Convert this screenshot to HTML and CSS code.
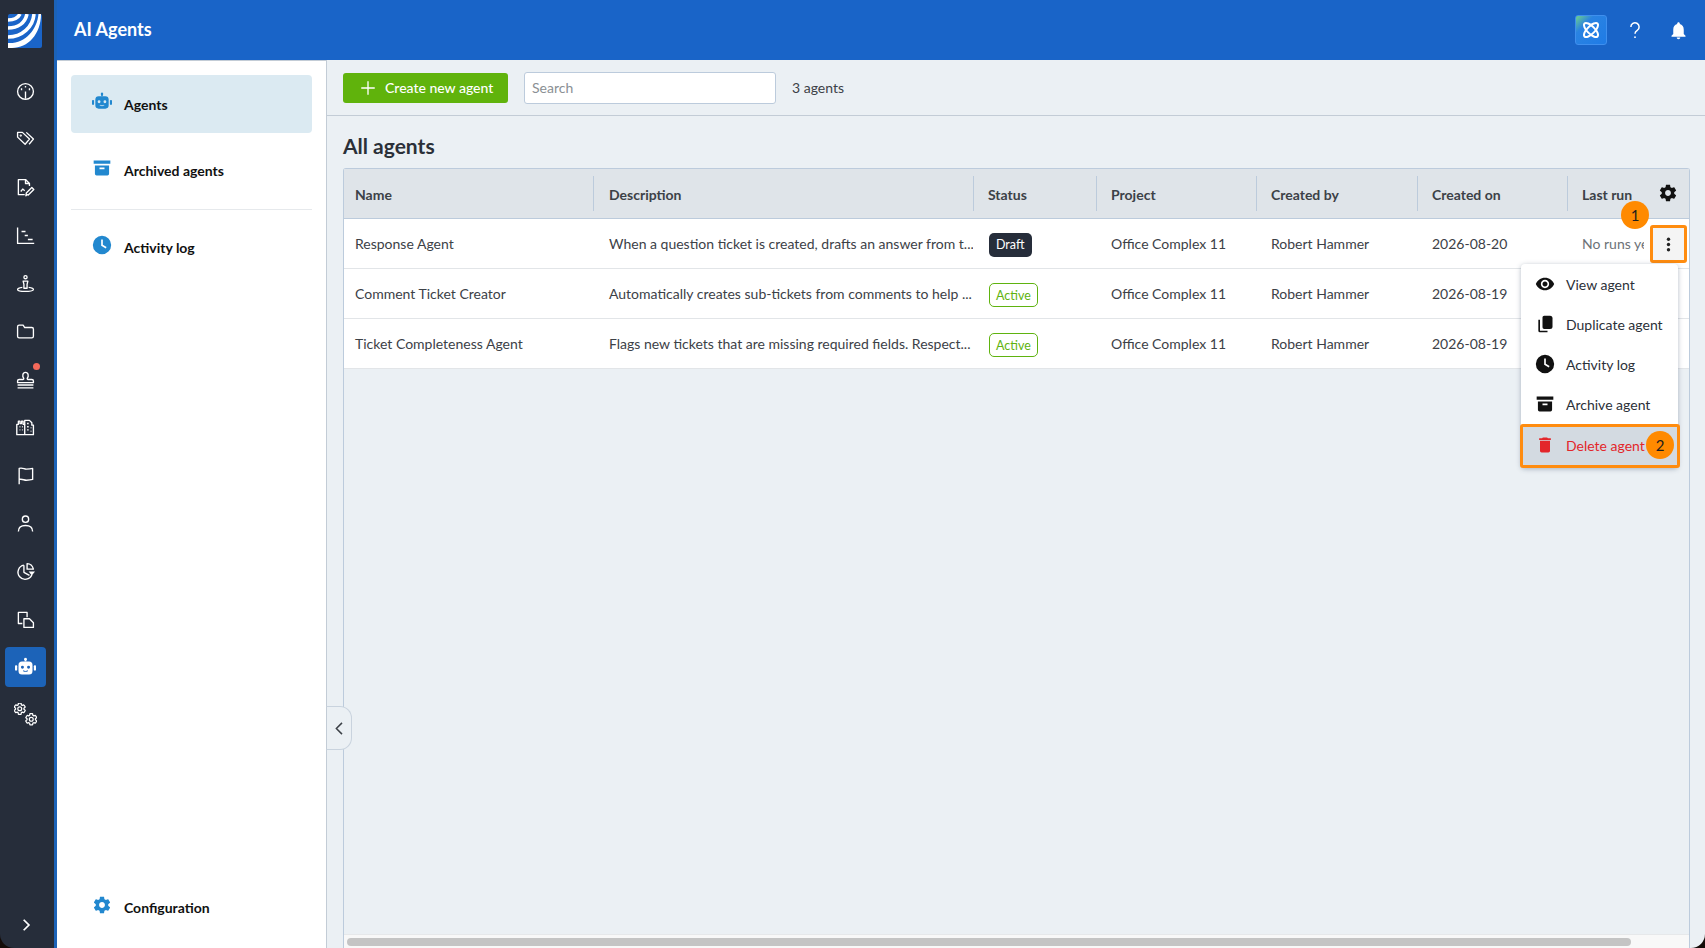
FILE: index.html
```html
<!DOCTYPE html>
<html lang="en">
  <head>
    <meta charset="UTF-8" />
    <meta name="viewport" content="width=device-width, initial-scale=1.0" />
    <title>AI Agents</title>
    <link rel="stylesheet" href="styles.css">
  </head>
  <body>
    <div class="app">
      <nav class="rail">
        <svg class="logo" viewBox="0 0 34 34">
          <rect width="34" height="34" rx="2" fill="#1a64c8" />
          <g fill="none" stroke="#fff" stroke-width="3.600">
            <path d="M0 6C6 6 10 4 12 0" />
            <path d="M0 14C10 14 17 9 19 0" />
            <path d="M0 23C14 23 25 13 26 0" />
          </g>
          <path fill="#fff" d="M0 29C17 30 29 16 30.500 0H33C33 20 20 34 4 34H0z" />
        </svg>
        <ul class="rail-list">
          <li class="rail-item">
            <svg viewBox="0 0 24 24"><circle cx="12" cy="12" r="10" /><path d="M12 12v9M12 5v2M7 8v2.500M17 8v2.500" /></svg>
          </li>
          <li class="rail-item">
            <svg viewBox="0 0 24 24"><path d="M2 9V3h6l9 8.500L11.500 18z" /><path d="M13 3l9 8.500L16.500 18" /><circle cx="6" cy="7" r=".6" /></svg>
          </li>
          <li class="rail-item">
            <svg viewBox="0 0 24 24"><path d="M11 21H3V2h9l5 5v3" /><path d="M12 2v5h5" /><path d="M6 17l2.500-3 2.500 2" /><path d="M14 21l-1.500 1.500.5-3.500 7-7 2.500 2.500-7 7z" /></svg>
          </li>
          <li class="rail-item">
            <svg viewBox="0 0 24 24"><path d="M2 2v20h21" /><path d="M7 7h5M11 12h4M15 17h6" /></svg>
          </li>
          <li class="rail-item">
            <svg viewBox="0 0 24 24"><circle cx="12" cy="4" r="2" /><path d="M9 9h6l-1 4v5h-4v-5z" /><path d="M8 17c-3 .5-6 1.500-6 2.500C2 21 7 22 12 22s10-1 10-2.500c0-1-3-2-6-2.500" /></svg>
          </li>
          <li class="rail-item">
            <svg viewBox="0 0 24 24"><path d="M2 6a2 2 0 0 1 2-2h5l2 3h9a2 2 0 0 1 2 2v9a2 2 0 0 1-2 2H4a2 2 0 0 1-2-2z" /></svg>
          </li>
          <li class="rail-item has-dot">
            <svg viewBox="0 0 24 24"><path d="M2 19h20M2 22.500h20" /><path d="M2 16v-2c0-1 1-2 2-2h5c1 0 1-1 .5-2C8 8 8 3 12 3s4 5 2.500 7c-.5 1-.5 2 .5 2h5c1 0 2 1 2 2v2z" /></svg>
          </li>
          <li class="rail-item">
            <svg viewBox="0 0 24 24"><path d="M1 21V8h2V4h2v3h2V4h2v4h2V3h6l3 3v3h2v12z" /><path d="M11 8v13M4.500 11h1M7.500 11h1M4.500 15h1M7.500 15h1M14 7h2M14 11h2M14 15h2M19 12v1M19 16v1" /></svg>
          </li>
          <li class="rail-item">
            <svg viewBox="0 0 24 24"><path d="M4 23V3c5-1 6 1 9 1s5 0 8-1v14c-3 1-5 1-8 1s-5-2-9-1" /></svg>
          </li>
          <li class="rail-item">
            <svg viewBox="0 0 24 24"><circle cx="12" cy="6.500" r="4" /><path d="M3 22c0-5 4-7.500 9-7.500s9 2.500 9 7.500" /></svg>
          </li>
          <li class="rail-item">
            <svg viewBox="0 0 24 24"><path d="M10 4a9 9 0 1 0 10 12" /><path d="M10 4v9l7 4" /><path d="M14 2c4 0 7 3 8 7h-8z" /><path class="solid" d="M16 12h8l-4 5z" /></svg>
          </li>
          <li class="rail-item">
            <svg viewBox="0 0 24 24"><path d="M8 17H3V3h11v6" /><path d="M10 11h7l5 5v6H10z" /></svg>
          </li>
          <li class="rail-item is-active">
            <svg viewBox="0 0 24 24"><use href="#robot" /></svg>
          </li>
          <li class="rail-item rail-gears">
            <svg viewBox="0 0 24 24"><use href="#gear" x="-1" y="-1" width="14" height="14" /><use href="#gear" x="11" y="10" width="14" height="14" /></svg>
          </li>
        </ul>
        <svg class="rail-toggle" viewBox="0 0 24 24"><path d="M8 3l9 9-9 9" /></svg>
      </nav>

      <div class="page">
        <header class="topbar">
          <h1>AI Agents</h1>
          <div class="topbar-icons">
            <span class="assist">
              <svg viewBox="0 0 24 24"><ellipse cx="12" cy="12" rx="11" ry="4.500" transform="rotate(45 12 12)" /><ellipse cx="12" cy="12" rx="11" ry="4.500" transform="rotate(-45 12 12)" /></svg>
            </span>
            <svg class="help" viewBox="0 0 24 24"><path d="M6.500 8a5.500 5.500 0 1 1 8.500 4.500c-2 1.300-3 2.200-3 4.500" /><circle cx="12" cy="21.500" r="1.200" /></svg>
            <svg class="bell" viewBox="0 0 24 24"><path d="M12 22c1.100 0 2-.9 2-2h-4c0 1.100.9 2 2 2zm6-6v-5c0-3.070-1.640-5.640-4.500-6.320V4c0-.83-.67-1.500-1.500-1.500s-1.500.67-1.500 1.500v.68C7.630 5.360 6 7.920 6 11v5l-2 2v1h16v-1l-2-2z" /></svg>
          </div>
        </header>

        <div class="content">
          <aside class="side">
            <a class="side-link is-current">
              <svg class="blue-icon" viewBox="0 0 24 24"><use href="#robot" /></svg>
              Agents
            </a>
            <a class="side-link">
              <svg class="blue-icon" viewBox="0 0 24 24"><use href="#archive" /></svg>
              Archived agents
            </a>
            <hr class="side-rule" />
            <a class="side-link">
              <svg class="blue-icon" viewBox="0 0 24 24"><use href="#clock" /></svg>
              Activity log
            </a>
            <a class="side-link side-bottom">
              <svg class="blue-icon" viewBox="0 0 24 24"><use href="#gear" /></svg>
              Configuration
            </a>
          </aside>

          <main class="main">
            <div class="toolbar">
              <button class="create-btn">
                <svg viewBox="0 0 24 24"><path d="M12 3v18M3 12h18" /></svg>
                Create new agent
              </button>
              <input class="search" type="text" placeholder="Search" />
              <span class="count">3 agents</span>
            </div>

            <div class="body">
              <h2>All agents</h2>
              <div class="table-wrap">
                <table class="agents">
                  <colgroup>
                    <col class="c-name" /><col class="c-desc" /><col class="c-status" /><col class="c-project" />
                    <col class="c-by" /><col class="c-on" /><col class="c-last" />
                  </colgroup>
                  <thead>
                    <tr>
                      <th><div>Name</div></th>
                      <th><div class="sep sep-desc">Description</div></th>
                      <th><div class="sep">Status</div></th>
                      <th><div class="sep">Project</div></th>
                      <th><div class="sep">Created by</div></th>
                      <th><div class="sep">Created on</div></th>
                      <th><div class="sep">Last run <svg class="table-gear" viewBox="0 0 24 24"><use href="#gear" /></svg></div></th>
                    </tr>
                  </thead>
                  <tbody>
                    <tr>
                      <td>Response Agent</td>
                      <td class="desc">When a question ticket is created, drafts an answer from t...</td>
                      <td><span class="tag tag-draft">Draft</span></td>
                      <td>Office Complex 11</td>
                      <td>Robert Hammer</td>
                      <td>2026-08-20</td>
                      <td class="last"><span class="last-text">No runs yet</span></td>
                    </tr>
                    <tr>
                      <td>Comment Ticket Creator</td>
                      <td class="desc">Automatically creates sub-tickets from comments to help ...</td>
                      <td><span class="tag tag-active">Active</span></td>
                      <td>Office Complex 11</td>
                      <td>Robert Hammer</td>
                      <td>2026-08-19</td>
                      <td></td>
                    </tr>
                    <tr>
                      <td>Ticket Completeness Agent</td>
                      <td class="desc">Flags new tickets that are missing required fields. Respect...</td>
                      <td><span class="tag tag-active">Active</span></td>
                      <td>Office Complex 11</td>
                      <td>Robert Hammer</td>
                      <td>2026-08-19</td>
                      <td></td>
                    </tr>
                  </tbody>
                </table>
                <div class="scroll-track"><div class="scroll-thumb"></div></div>
              </div>
            </div>

            <button class="collapse">
              <svg viewBox="0 0 24 24"><path d="M16 3l-9 9 9 9" /></svg>
            </button>

            <button class="kebab">
              <svg viewBox="0 0 24 24"><circle cx="12" cy="4.500" r="2.400" /><circle cx="12" cy="12" r="2.400" /><circle cx="12" cy="19.500" r="2.400" /></svg>
            </button>
            <span class="step step-one">1</span>

            <ul class="menu">
              <li>
                <svg viewBox="0 0 24 24"><path d="M12 4.500C7 4.500 2.730 7.610 1 12c1.730 4.390 6 7.500 11 7.500s9.270-3.110 11-7.500c-1.730-4.390-6-7.500-11-7.500zM12 17c-2.760 0-5-2.240-5-5s2.240-5 5-5 5 2.240 5 5-2.240 5-5 5zm0-8c-1.660 0-3 1.340-3 3s1.340 3 3 3 3-1.340 3-3-1.340-3-3-3z" /></svg>
                View agent
              </li>
              <li>
                <svg viewBox="0 0 24 24"><path d="M4 7h2v13h9v2H6a2 2 0 0 1-2-2z" /><path d="M11 2h7a3 3 0 0 1 3 3v10a3 3 0 0 1-3 3h-7a2 2 0 0 1-2-2V4a2 2 0 0 1 2-2z" /></svg>
                Duplicate agent
              </li>
              <li>
                <svg viewBox="0 0 24 24"><use href="#clock" /></svg>
                Activity log
              </li>
              <li>
                <svg viewBox="0 0 24 24"><use href="#archive" /></svg>
                Archive agent
              </li>
              <li class="menu-danger">
                <svg viewBox="0 0 24 24"><path d="M6 19c0 1.100.9 2 2 2h8c1.100 0 2-.9 2-2V7H6v12zM19 4h-3.500l-1-1h-5l-1 1H5v2h14V4z" /></svg>
                Delete agent
              </li>
            </ul>
            <span class="step step-two">2</span>
          </main>
        </div>
      </div>
    </div>

    <svg class="defs" width="0" height="0">
      <defs>
        <symbol id="robot" viewBox="0 0 24 24">
          <path d="M11 1h2v4h-2z" /><circle cx="12" cy="2.500" r="1.500" />
          <path fill-rule="evenodd" d="M8 5h8a4 4 0 0 1 4 4v7a4 4 0 0 1-4 4H8a4 4 0 0 1-4-4V9a4 4 0 0 1 4-4zm.5 5a1.700 1.700 0 1 0 0 3.400 1.700 1.700 0 0 0 0-3.400zm7 0a1.700 1.700 0 1 0 0 3.400 1.700 1.700 0 0 0 0-3.400zM9 16c1.500 1.300 4.500 1.300 6 0l-.7-.8c-1 .9-3.600.9-4.600 0z" />
          <rect x="0" y="9.500" width="2.500" height="6" rx="1" /><rect x="21.500" y="9.500" width="2.500" height="6" rx="1" />
        </symbol>
        <symbol id="archive" viewBox="0 0 24 24">
          <path fill-rule="evenodd" d="M2 3h20v4H2zM3.500 9h17v10a2 2 0 0 1-2 2h-13a2 2 0 0 1-2-2zM9 11.500v2h6v-2z" />
        </symbol>
        <symbol id="clock" viewBox="0 0 24 24">
          <path fill-rule="evenodd" d="M12 1a11 11 0 1 1 0 22 11 11 0 0 1 0-22zM11 5.500v7.300l5.500 3.300 1-1.600-4.500-2.700V5.500z" />
        </symbol>
        <symbol id="gear" viewBox="0 0 24 24">
          <path d="M19.430 12.980c.04-.32.070-.64.070-.98s-.03-.66-.07-.98l2.110-1.650c.19-.15.240-.42.120-.64l-2-3.460c-.12-.22-.39-.3-.61-.22l-2.490 1c-.52-.4-1.080-.73-1.690-.98l-.38-2.650C14.460 2.180 14.250 2 14 2h-4c-.25 0-.46.18-.49.42l-.38 2.650c-.61.25-1.170.59-1.690.98l-2.490-1c-.23-.09-.49 0-.61.22l-2 3.460c-.13.22-.07.49.12.64l2.110 1.650c-.04.32-.07.65-.07.98s.03.66.07.98l-2.110 1.650c-.19.15-.24.42-.12.64l2 3.460c.12.22.39.3.61.22l2.490-1c.52.4 1.080.73 1.690.98l.38 2.650c.03.24.24.42.49.42h4c.25 0 .46-.18.49-.42l.38-2.650c.61-.25 1.170-.59 1.690-.98l2.490 1c.23.09.49 0 .61-.22l2-3.460c.12-.22.07-.49-.12-.64l-2.110-1.650zM12 15.500c-1.930 0-3.500-1.570-3.500-3.500s1.570-3.500 3.500-3.500 3.500 1.570 3.500 3.500-1.570 3.500-3.500 3.500z" />
        </symbol>
      </defs>
    </svg>
  </body>
</html>
```
FILE: styles.css
```css
* {
  box-sizing: border-box;
}
html,
body {
  height: 100%;
  margin: 0;
  overflow: hidden;
}
body {
  font-family: Lato, "Open Sans", sans-serif;
  font-size: 14px;
  color: #3c4147;
  background-color: #140c08;
}
svg {
  display: block;
  flex: none;
}
ul {
  list-style: none;
  margin: 0;
  padding: 0;
}
.defs {
  display: none;
}
.app {
  display: flex;
  height: 948px;
  border-radius: 0 0 14px 14px;
  overflow: hidden;
}

/* left rail */
.rail {
  width: 57px;
  flex: none;
  display: flex;
  flex-direction: column;
  align-items: center;
  padding-right: 4px;
  background-color: #262d3a;
  border-right: 3px solid #1c63b8;
}
.logo {
  width: 34px;
  height: 34px;
  margin-top: 14px;
}
.rail-list {
  margin-top: 19px;
  width: 100%;
}
.rail-item {
  position: relative;
  height: 48px;
  display: flex;
  align-items: center;
  justify-content: center;
}
.rail-item svg {
  width: 19px;
  height: 19px;
  fill: none;
  stroke: #fff;
  stroke-width: 1.700;
  stroke-linejoin: round;
}
.rail-item .solid {
  fill: #fff;
  stroke: none;
}
.rail-item.rail-gears svg {
  width: 23px;
  height: 23px;
  margin-top: -2px;
  stroke-width: 2.200;
}
.rail-item.has-dot::after {
  content: "";
  position: absolute;
  top: 8px;
  left: 33px;
  width: 7px;
  height: 7px;
  border-radius: 50%;
  background-color: #f4695a;
}
.rail-item.is-active::before {
  content: "";
  position: absolute;
  top: 4px;
  left: 5px;
  width: 41px;
  height: 40px;
  border-radius: 4px;
  background-color: #1c63b8;
}
.rail-item.is-active svg {
  position: relative;
  width: 21px;
  height: 21px;
  fill: #fff;
  stroke: none;
}
.rail-toggle {
  width: 14px;
  height: 14px;
  margin-top: auto;
  margin-bottom: 16px;
  margin-left: 2px;
  fill: none;
  stroke: #fff;
  stroke-width: 3;
}

/* top bar */
.page {
  flex: 1;
  min-width: 0;
  display: flex;
  flex-direction: column;
}
.topbar {
  height: 60px;
  flex: none;
  display: flex;
  align-items: center;
  justify-content: space-between;
  padding: 0 16px 0 17px;
  background-color: #1964c8;
  color: #fff;
}
.topbar h1 {
  margin: 0 0 3px;
  font-size: 18px;
  font-weight: 700;
}
.topbar-icons {
  display: flex;
  align-items: center;
}
.assist {
  width: 32px;
  height: 30px;
  display: flex;
  align-items: center;
  justify-content: center;
  border: 1px solid #3f8fee;
  border-radius: 3px;
  background: linear-gradient(135deg, #6fd08a 0%, #2a83e2 30%, #1f7be6 100%);
}
.assist svg {
  width: 20px;
  height: 20px;
  fill: none;
  stroke: #fff;
  stroke-width: 2.400;
}
.help {
  width: 18px;
  height: 18px;
  margin-left: 19px;
  fill: none;
  stroke: #fff;
  stroke-width: 2;
}
.help circle {
  fill: #fff;
  stroke: none;
}
.bell {
  width: 21px;
  height: 21px;
  margin-left: 24px;
  fill: #fff;
}

/* section nav */
.content {
  flex: 1;
  min-height: 0;
  display: flex;
}
.side {
  width: 270px;
  flex: none;
  display: flex;
  flex-direction: column;
  padding: 14px 14px 0;
  background-color: #fff;
  border-right: 1px solid #c3ccd6;
  border-top: 1px solid #c3ccd6;
}
.side-link {
  height: 58px;
  display: flex;
  align-items: center;
  gap: 12px;
  padding-left: 21px;
  border-radius: 4px;
  font-size: 14px;
  font-weight: 700;
  color: #111;
}
.side-link.is-current {
  background-color: #dbeaf2;
  margin-bottom: 8px;
}
.side-rule {
  width: 100%;
  margin: 10px 0 8px;
  border: 0;
  border-top: 1px solid #e6e9ec;
}
.side-bottom {
  margin-top: auto;
  margin-bottom: 12px;
}
.blue-icon {
  width: 20px;
  height: 20px;
  margin-top: -4px;
  fill: #2288cf;
}

/* main area */
.main {
  position: relative;
  flex: 1;
  min-width: 0;
  display: flex;
  flex-direction: column;
  background-color: #ebf0f4;
}
.toolbar {
  height: 56px;
  flex: none;
  display: flex;
  align-items: center;
  padding-left: 16px;
  border-bottom: 1px solid #c3ccd6;
}
.create-btn {
  width: 165px;
  height: 30px;
  display: flex;
  align-items: center;
  gap: 8px;
  padding: 0 0 0 16px;
  border: none;
  border-radius: 3px;
  background-color: #60b30c;
  color: #fff;
  font-family: inherit;
  font-size: 14px;
  font-weight: 500;
}
.create-btn svg {
  width: 18px;
  height: 18px;
  fill: none;
  stroke: #fff;
  stroke-width: 1.800;
}
.search {
  width: 252px;
  height: 32px;
  margin-left: 16px;
  padding: 0 7px;
  border: 1px solid #bccbdc;
  border-radius: 3px;
  background-color: #fff;
  font-family: inherit;
  font-size: 14px;
}
.search::placeholder {
  color: #8a8f94;
}
.count {
  margin-left: 16px;
}
.body {
  flex: 1;
  min-height: 0;
  display: flex;
  flex-direction: column;
  padding: 0 15px 0 16px;
}
.body h2 {
  height: 52px;
  flex: none;
  margin: 0;
  padding-top: 16px;
  font-size: 21px;
  line-height: 27px;
  font-weight: 700;
  color: #2b3038;
}

/* table */
.table-wrap {
  flex: 1;
  min-height: 0;
  display: flex;
  flex-direction: column;
  border: 1px solid #bccbdc;
  border-bottom: none;
  border-radius: 3px 3px 0 0;
}
.agents {
  width: 100%;
  table-layout: fixed;
  border-collapse: collapse;
}
.c-name { width: 249px; }
.c-desc { width: 380px; }
.c-status { width: 123px; }
.c-project { width: 160px; }
.c-by { width: 161px; }
.c-on { width: 150px; }
.agents th {
  height: 49px;
  padding: 0;
  background-color: #dfe4e9;
  border-bottom: 1px solid #bccbdc;
  text-align: left;
  font-weight: 700;
}
.agents th div {
  height: 35px;
  display: flex;
  align-items: center;
  padding: 2px 0 0 11px;
}
.agents th div.sep {
  padding-left: 14px;
  border-left: 1px solid #bccbdc;
}
.agents th div.sep-desc {
  padding-left: 15px;
}
.table-gear {
  width: 20px;
  height: 20px;
  margin-left: 26px;
  margin-top: -2px;
  fill: #111;
}
.agents td {
  height: 50px;
  padding: 0 0 0 15px;
  background-color: #fff;
  border-bottom: 1px solid #e2e5e8;
  white-space: nowrap;
  overflow: hidden;
}
.agents td:first-child {
  padding-left: 11px;
}
.agents td.desc {
  padding-left: 16px;
}
.tag {
  display: inline-block;
  height: 24px;
  line-height: 23px;
  margin: 3px 0 0 1px;
  padding: 0 7px;
  border-radius: 5px;
  font-size: 12.500px;
}
.tag-draft {
  background-color: #262d3a;
  color: #fff;
}
.tag-active {
  padding: 0 6px;
  border: 1px solid #5fb30f;
  color: #5fb30f;
  background-color: #fff;
}
.last-text {
  display: block;
  width: 62px;
  overflow: hidden;
  color: #6d7278;
}
.scroll-track {
  height: 14px;
  margin-top: auto;
  padding: 3px 0 0 3px;
  background-color: #f8f8f8;
  border-top: 1px solid #e6e8ea;
}
.scroll-thumb {
  width: 1284px;
  height: 8px;
  border-radius: 4px;
  background-color: #c4c4c4;
}

/* things lying over the table */
.collapse {
  position: absolute;
  left: -1px;
  top: 646px;
  width: 26px;
  height: 44px;
  display: flex;
  align-items: center;
  justify-content: center;
  padding: 0;
  background-color: #ebf0f4;
  border: 1px solid #c9d3de;
  border-left-color: #c3ccd6;
  border-radius: 0 12px 12px 0;
}
.collapse svg {
  width: 15px;
  height: 15px;
  fill: none;
  stroke: #3c4147;
  stroke-width: 2.400;
}
.kebab {
  position: absolute;
  left: 1323px;
  top: 165px;
  width: 37px;
  height: 38px;
  display: flex;
  align-items: center;
  justify-content: center;
  padding: 0 1px 0 0;
  border: 3px solid #ff8c0f;
  border-radius: 3px;
  background-color: #f4f4f4;
}
.kebab svg {
  width: 17px;
  height: 17px;
  fill: #222;
}
.step {
  position: absolute;
  width: 28px;
  height: 28px;
  border-radius: 50%;
  background-color: #ff8a00;
  color: #1d1d1d;
  font-size: 15px;
  line-height: 28px;
  text-align: center;
}
.step-one {
  left: 1294px;
  top: 141px;
}
.step-two {
  left: 1319px;
  top: 371px;
}
.menu {
  position: absolute;
  left: 1194px;
  top: 204px;
  width: 157px;
  background-color: #fff;
  border-radius: 4px;
  box-shadow: 0 1px 5px rgba(40, 60, 90, 0.35);
}
.menu li {
  height: 40px;
  display: flex;
  align-items: center;
  gap: 11px;
  padding-left: 14px;
  color: #2b3038;
}
.menu li svg {
  width: 20px;
  height: 20px;
  fill: #111;
}
.menu .menu-danger {
  height: 44px;
  margin: 0 -2px 0 -1px;
  color: #e3262a;
  background-color: #d3dae1;
  border: 3px solid #ff8c0f;
  border-radius: 3px;
  padding: 0 0 2px 12px;
}
.menu .menu-danger svg {
  fill: #e3262a;
}
```
